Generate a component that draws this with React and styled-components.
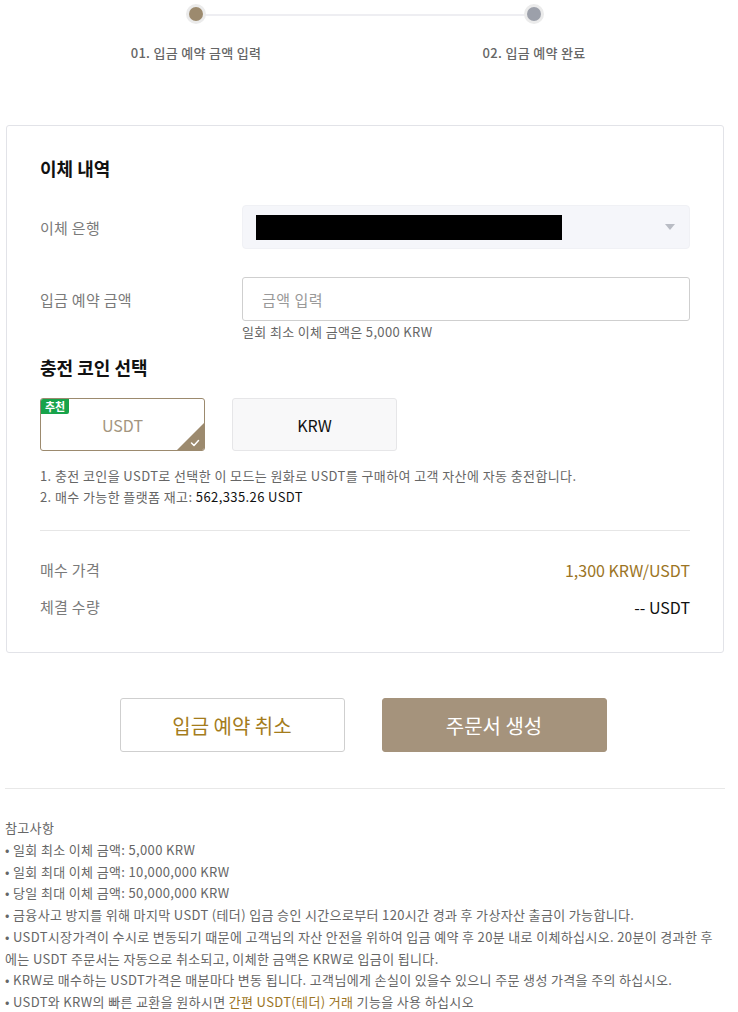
import React from "react";
import styled, { createGlobalStyle } from "styled-components";

const Global = createGlobalStyle`
  html, body { margin: 0; padding: 0; background: #fff; }
  body { font-family: "Noto Sans CJK KR", "Noto Sans", sans-serif; color: #222; }
  * { box-sizing: border-box; }
`;

const Page = styled.div`
  width: 720px;
  margin-left: 5px;
  padding-bottom: 10px;
`;

const Steps = styled.div`
  position: relative;
  display: flex;
  justify-content: center;
  gap: 158px;
  padding-top: 4px;
  &::before {
    content: "";
    position: absolute;
    left: 192px;
    width: 338px;
    top: 14px;
    height: 2px;
    background: #eeeef2;
  }
`;

const Step = styled.div`
  width: 180px;
  display: flex;
  flex-direction: column;
  align-items: center;
  position: relative;
`;

const Dot = styled.div`
  width: 20px;
  height: 20px;
  border-radius: 50%;
  background: #ebebeb;
  display: flex;
  align-items: center;
  justify-content: center;
  &::after {
    content: "";
    width: 14px;
    height: 14px;
    border-radius: 50%;
    background: ${(p) => p.$color};
  }
`;

const StepLabel = styled.div`
  margin-top: 19px;
  font-size: 13px;
  line-height: 20px;
  font-weight: 500;
  letter-spacing: 0.3px;
  color: #666;
`;

const Card = styled.div`
  margin-top: 62px;
  margin-left: 1px;
  width: 718px;
  border: 1px solid #e2e3e8;
  border-radius: 3px;
  padding: 29px 33px 34px 33px;
`;

const Title = styled.h2`
  margin: 0;
  margin-top: ${(p) => p.$mt || 0}px;
  font-size: 18px;
  line-height: 26px;
  font-weight: 700;
  color: #111;
`;

const FormRow = styled.div`
  display: flex;
  align-items: center;
  margin-top: ${(p) => p.$mt}px;
`;

const Label = styled.div`
  width: 202px;
  font-size: 15px;
  letter-spacing: 0.3px;
  color: #7a7a7a;
`;

const Select = styled.div`
  flex: 1;
  height: 44px;
  background: #f5f6fa;
  border-radius: 4px;
  border: 1px solid #f0f1f5;
  display: flex;
  align-items: center;
  padding: 0 14px 0 13px;
  justify-content: space-between;
`;

const Redacted = styled.div`
  width: 306px;
  height: 25px;
  background: #000;
`;

const Caret = styled.div`
  width: 0;
  height: 0;
  border-left: 5px solid transparent;
  border-right: 5px solid transparent;
  border-top: 6px solid #b9bcc4;
`;

const Input = styled.input`
  flex: 1;
  height: 44px;
  border: 1px solid #cfcfcf;
  border-radius: 3px;
  padding: 0 19px;
  font-family: inherit;
  font-size: 15px;
  letter-spacing: 0.5px;
  color: #333;
  outline: none;
  &::placeholder { color: #999; }
`;

const Hint = styled.div`
  margin-top: 3px;
  margin-left: 202px;
  font-size: 13px;
  line-height: 16px;
  letter-spacing: 0.35px;
  color: #666;
`;

const CoinRow = styled.div`
  display: flex;
  gap: 27px;
  margin-top: 18px;
`;

const Coin = styled.div`
  position: relative;
  overflow: hidden;
  width: 165px;
  height: 53px;
  border-radius: 3px;
  display: flex;
  align-items: center;
  justify-content: center;
  font-size: 16px;
  border: 1px solid ${(p) => (p.$active ? "#9c8a6e" : "#e6e6e8")};
  background: ${(p) => (p.$active ? "#fff" : "#f8f8f9")};
  color: ${(p) => (p.$active ? "#a39580" : "#111")};
`;

const Badge = styled.span`
  position: absolute;
  top: 0;
  left: 0;
  height: 15px;
  padding: 0 4px;
  background: #17a34a;
  color: #fff;
  font-size: 11px;
  font-weight: 700;
  line-height: 15px;
  border-bottom-right-radius: 2px;
`;

const Corner = styled.svg`
  position: absolute;
  right: 0;
  bottom: 0;
`;

const Notes = styled.div`
  margin-top: 14px;
  font-size: 13px;
  line-height: 21px;
  letter-spacing: 0.4px;
  color: #666;
`;

const Strong = styled.span`
  color: #111;
`;

const Divider = styled.hr`
  margin: ${(p) => p.$m};
  border: none;
  border-top: 1px solid ${(p) => p.$c || "#e6e6e6"};
`;

const InfoRow = styled.div`
  display: flex;
  justify-content: space-between;
  align-items: center;
  line-height: 22px;
  margin-top: ${(p) => p.$mt}px;
`;

const InfoLabel = styled.span`
  font-size: 15px;
  letter-spacing: 0.3px;
  color: #7a7a7a;
`;

const InfoValue = styled.span`
  font-size: 16px;
  color: ${(p) => p.$color || "#111"};
`;

const Buttons = styled.div`
  display: flex;
  justify-content: center;
  gap: 37px;
  margin-top: 45px;
  padding-right: 4px;
`;

const Button = styled.button`
  width: 225px;
  height: 54px;
  border-radius: 3px;
  font-family: inherit;
  font-size: 20px;
  cursor: pointer;
  border: 1px solid ${(p) => (p.$primary ? "#a5937c" : "#cfcfcf")};
  background: ${(p) => (p.$primary ? "#a5937c" : "#fff")};
  color: ${(p) => (p.$primary ? "#fff" : "#a47c1c")};
`;

const Ref = styled.div`
  margin-top: 28px;
  font-size: 13px;
  line-height: 21.75px;
  letter-spacing: 0.35px;
  color: #666;
`;

const RefTitle = styled.div`
  color: #666;
`;

const RefItem = styled.div``;

const Link = styled.span`
  color: #9b7424;
`;

export default function App() {
  return (
    <>
      <Global />
      <Page>
        <Steps>
          <Step>
            <Dot $color="#9c8a6e" />
            <StepLabel>01. 입금 예약 금액 입력</StepLabel>
          </Step>
          <Step>
            <Dot $color="#9ca0aa" />
            <StepLabel>02. 입금 예약 완료</StepLabel>
          </Step>
        </Steps>

        <Card>
          <Title>이체 내역</Title>
          <FormRow $mt={24}>
            <Label>이체 은행</Label>
            <Select>
              <Redacted />
              <Caret />
            </Select>
          </FormRow>
          <FormRow $mt={28}>
            <Label>입금 예약 금액</Label>
            <Input placeholder="금액 입력" />
          </FormRow>
          <Hint>일회 최소 이체 금액은 5,000 KRW</Hint>

          <Title $mt={14}>충전 코인 선택</Title>
          <CoinRow>
            <Coin $active>
              <Badge>추천</Badge>
              USDT
              <Corner width="27" height="27" viewBox="0 0 27 27">
                <polygon points="27,0 27,27 0,27" fill="#9c8a6e" />
                <path d="M14.5 20 L17 22.5 L21.5 17.5" stroke="#fff" strokeWidth="1.5" fill="none" strokeLinecap="round" strokeLinejoin="round" />
              </Corner>
            </Coin>
            <Coin>KRW</Coin>
          </CoinRow>
          <Notes>
            <div>1. 충전 코인을 USDT로 선택한 이 모드는 원화로 USDT를 구매하여 고객 자산에 자동 충전합니다.</div>
            <div>
              2. 매수 가능한 플랫폼 재고: <Strong>562,335.26 USDT</Strong>
            </div>
          </Notes>
          <Divider $m="23px 0 0 0" />
          <InfoRow $mt={28}>
            <InfoLabel>매수 가격</InfoLabel>
            <InfoValue $color="#9b7424">1,300 KRW/USDT</InfoValue>
          </InfoRow>
          <InfoRow $mt={15}>
            <InfoLabel>체결 수량</InfoLabel>
            <InfoValue>-- USDT</InfoValue>
          </InfoRow>
        </Card>

        <Buttons>
          <Button>입금 예약 취소</Button>
          <Button $primary>주문서 생성</Button>
        </Buttons>

        <Divider $m="36px 0 0 0" $c="#e8e8e8" />

        <Ref>
          <RefTitle>참고사항</RefTitle>
          <RefItem>• 일회 최소 이체 금액: 5,000 KRW</RefItem>
          <RefItem>• 일회 최대 이체 금액: 10,000,000 KRW</RefItem>
          <RefItem>• 당일 최대 이체 금액: 50,000,000 KRW</RefItem>
          <RefItem>• 금융사고 방지를 위해 마지막 USDT (테더) 입금 승인 시간으로부터 120시간 경과 후 가상자산 출금이 가능합니다.</RefItem>
          <RefItem>• USDT시장가격이 수시로 변동되기 때문에 고객님의 자산 안전을 위하여 입금 예약 후 20분 내로 이체하십시오. 20분이 경과한 후에는 USDT 주문서는 자동으로 취소되고, 이체한 금액은 KRW로 입금이 됩니다.</RefItem>
          <RefItem>• KRW로 매수하는 USDT가격은 매분마다 변동 됩니다. 고객님에게 손실이 있을수 있으니 주문 생성 가격을 주의 하십시오.</RefItem>
          <RefItem>
            • USDT와 KRW의 빠른 교환을 원하시면 <Link>간편 USDT(테더) 거래</Link> 기능을 사용 하십시오
          </RefItem>
        </Ref>
      </Page>
    </>
  );
}
